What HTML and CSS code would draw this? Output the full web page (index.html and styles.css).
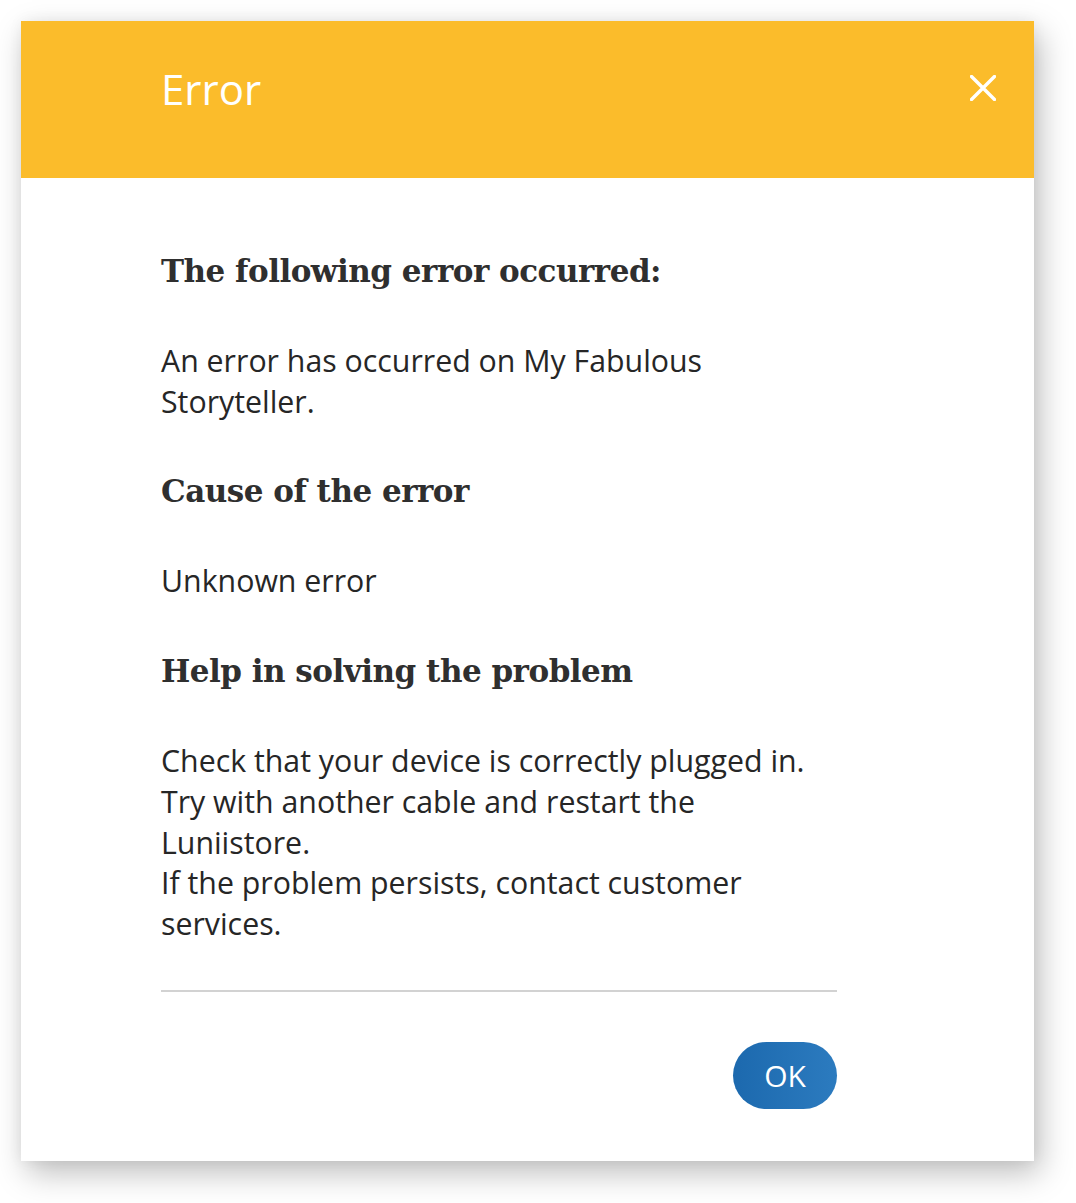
FILE: index.html
```html
<!DOCTYPE html>
<html>
<head>
<meta charset="utf-8">
<link rel="stylesheet" href="styles.css">
</head>
<body>
<div class="dialog">
  <div class="header">
    <div class="title">Error</div>
    <button class="close" aria-label="Close">
      <svg width="26" height="26" viewBox="0 0 26 26"><path d="M1.5 1.5 L24.5 24.5 M24.5 1.5 L1.5 24.5" stroke="#fff" stroke-width="3.4" stroke-linecap="round" fill="none"/></svg>
    </button>
  </div>
  <div class="content">
    <h2 class="heading">The following error occurred:</h2>
    <p class="text">An error has occurred on My Fabulous<br>Storyteller.</p>
    <h2 class="heading">Cause of the error</h2>
    <p class="text">Unknown error</p>
    <h2 class="heading">Help in solving the problem</h2>
    <p class="text">Check that your device is correctly plugged in.<br>Try with another cable and restart the<br>Luniistore.<br>If the problem persists, contact customer<br>services.</p>
    <div class="divider"></div>
    <div class="actions">
      <button class="ok">OK</button>
    </div>
  </div>
</div>
</body>
</html>
```
FILE: styles.css
```css
html, body {
  margin: 0;
  padding: 0;
  background: #ffffff;
}
body {
  padding: 21px 0 42px 21px;
}
.dialog {
  width: 1013px;
  height: 1140px;
  background: #fff;
  box-shadow: 6px 12px 30px rgba(0,0,0,0.26), 0 0 14px rgba(0,0,0,0.05);
  display: flex;
  flex-direction: column;
}
.header {
  height: 157px;
  background: #fbbc2b;
  display: flex;
  align-items: center;
  justify-content: space-between;
  padding: 0 38px 22px 140px;
  box-sizing: border-box;
}
.title {
  font-family: "Open Sans", sans-serif;
  font-size: 42px;
  color: #fff;
  line-height: 1;
}
.close {
  background: none;
  border: none;
  padding: 0;
  width: 26px;
  height: 26px;
  display: flex;
  margin-top: -2px;
}
.content {
  padding: 73px 197px 0 140px;
  display: flex;
  flex-direction: column;
}
.heading {
  margin: 0 0 49px 0;
  font-family: "DejaVu Serif", serif;
  font-weight: bold;
  font-size: 31px;
  line-height: 41px;
  color: #2f2f2f;
  letter-spacing: -0.5px;
}
.text {
  margin: 0 0 49px 0;
  font-family: "Open Sans", sans-serif;
  font-size: 30.3px;
  line-height: 40.7px;
  color: #262626;
}
.content .text:last-of-type {
  margin-bottom: 45px;
}
.divider {
  height: 2px;
  background: #d2d2d2;
}
.actions {
  display: flex;
  justify-content: flex-end;
  padding-top: 50px;
}
.ok {
  width: 104px;
  height: 67px;
  border: none;
  border-radius: 34px;
  background: linear-gradient(90deg, #1c69ae, #2c7bbf);
  color: #fff;
  font-family: "Open Sans", sans-serif;
  font-size: 30px;
  padding: 0;
}
```
